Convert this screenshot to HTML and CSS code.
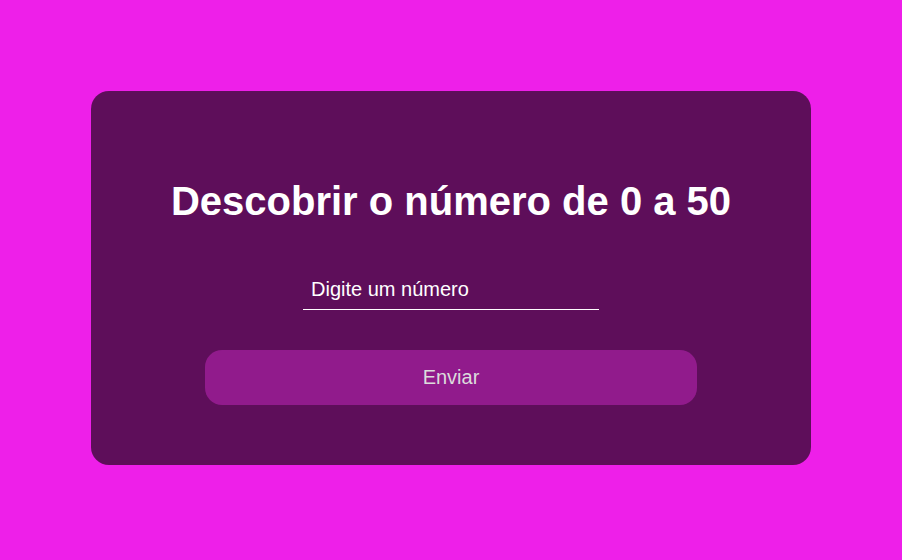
FILE: index.html
```html
<!DOCTYPE html>
<html lang="pt">
<head>
<meta charset="utf-8">
<title>Descobrir o número</title>
<link rel="stylesheet" href="styles.css">
</head>
<body>
<main class="page">
  <section class="card">
    <h1 class="title">Descobrir o número de 0 a 50</h1>
    <input class="field" type="text" placeholder="Digite um número">
    <button class="send" type="button">Enviar</button>
  </section>
</main>
</body>
</html>
```
FILE: styles.css
```css
html, body {
  margin: 0;
  padding: 0;
}
body {
  background: #ee1fe9;
  font-family: "Liberation Sans", Arial, sans-serif;
}
.page {
  height: 556px;
  display: flex;
  align-items: center;
  justify-content: center;
}
.card {
  width: 720px;
  box-sizing: border-box;
  background: #5e0e5a;
  border-radius: 18px;
  padding: 87px 0 60px;
  display: flex;
  flex-direction: column;
  align-items: center;
}
.title {
  margin: 0;
  color: #ffffff;
  font-size: 40px;
  line-height: 46px;
  font-weight: bold;
}
.field {
  margin-top: 44px;
  width: 296px;
  box-sizing: border-box;
  height: 42px;
  padding: 10px 8px 8px;
  background: transparent;
  border: none;
  border-bottom: 1px solid #ffffff;
  outline: none;
  color: #ffffff;
  font-family: "Liberation Sans", Arial, sans-serif;
  font-size: 20px;
}
.field::placeholder {
  color: #ffffff;
  opacity: 1;
}
.send {
  margin-top: 40px;
  width: 492px;
  height: 55px;
  border: none;
  border-radius: 17px;
  background: #911b8c;
  color: #dcdcdc;
  font-family: "Liberation Sans", Arial, sans-serif;
  font-size: 20px;
  cursor: pointer;
}
```
